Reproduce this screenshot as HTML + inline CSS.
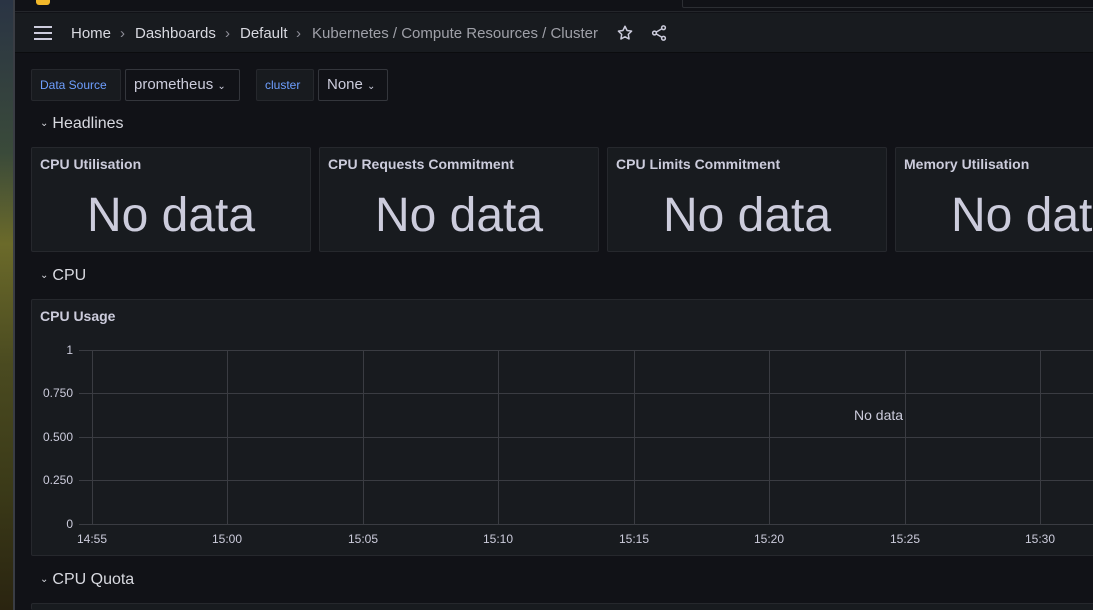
<!DOCTYPE html>
<html style="overflow:hidden;height:610px"><head><style>
*{margin:0;padding:0;box-sizing:border-box}
body{width:1093px;height:610px;overflow:hidden;background:#111217;font-family:"Liberation Sans",sans-serif;color:#ccccdc;position:relative}
.strip{position:absolute;left:0;top:0;width:13px;height:610px;background:linear-gradient(180deg,#2a3444 0%,#3a4a3a 25%,#6b6a2a 40%,#4a4a20 60%,#3b3a18 80%,#2a2410 100%)}
.edge{position:absolute;left:13px;top:0;width:2px;height:610px;background:#3a3d44}
.top{position:absolute;left:15px;top:0;right:0;height:12px;background:#111217;border-bottom:1px solid #24262b}
.search{position:absolute;left:667px;top:-2px;right:-2px;height:10px;border:1px solid #2c2e33;border-radius:2px;background:#111217}
.logo{position:absolute;left:21px;top:0;width:14px;height:5px;background:#f2b82a;border-radius:0 0 3px 3px}
.nav{position:absolute;left:15px;top:13px;right:0;height:40px;background:#181b1f;border-bottom:1px solid #0b0c0e;font-size:15px}
.nav span{position:absolute;top:12px}
.pnl{position:absolute;background:#181b1f;border:1px solid #26282d;border-radius:2px}
.pt{position:absolute;left:8px;top:8px;font-size:14px;font-weight:bold;color:#ccccdc}
.nd{position:absolute;left:0;right:0;top:40px;text-align:center;font-size:48px;color:#ccccdc;white-space:nowrap}
.row{position:absolute;left:40px;font-size:16px;color:#d8d9e0}
.row i{font-style:normal;font-size:10px;margin-right:4px;position:relative;top:-2px}
.lbl{position:absolute;height:32px;top:69px;background:#181b1f;border:1px solid #26282d;border-radius:2px;font-size:12px;color:#6e9fff;line-height:30px;padding-left:8px}
.sel{position:absolute;height:32px;top:69px;background:#111217;border:1px solid #34363c;border-radius:2px;font-size:15px;color:#ccccdc;line-height:30px;padding-left:8px}
.ax{position:absolute;font-size:12px;color:#ccccdc}
</style></head><body>
<div class="strip"></div><div class="edge"></div>
<div class="top"><div class="logo"></div><div class="search"></div></div>
<div class="nav">
<svg style="position:absolute;left:18px;top:12px" width="20" height="16"><path d="M1 2h18M1 8h18M1 14h18" stroke="#ccccdc" stroke-width="2"/></svg>
<span style="left:56px;color:#d8d9e0">Home</span>
<span style="left:105px;color:#8e8e98">›</span>
<span style="left:120px;color:#d8d9e0">Dashboards</span>
<span style="left:210px;color:#8e8e98">›</span>
<span style="left:225px;color:#d8d9e0">Default</span>
<span style="left:281px;color:#8e8e98">›</span>
<span style="left:297px;color:#9fa0a8">Kubernetes / Compute Resources / Cluster</span>
<svg style="position:absolute;left:601px;top:11px" width="18" height="18" viewBox="0 0 24 24"><path d="M12 3l2.7 5.6 6.1.9-4.4 4.3 1 6.1L12 17l-5.4 2.9 1-6.1L3.2 9.5l6.1-.9z" fill="none" stroke="#ccccdc" stroke-width="2" stroke-linejoin="round"/></svg>
<svg style="position:absolute;left:635px;top:11px" width="18" height="18" viewBox="0 0 24 24" fill="none" stroke="#ccccdc" stroke-width="2"><circle cx="18" cy="5" r="2.5"/><circle cx="6" cy="12" r="2.5"/><circle cx="18" cy="19" r="2.5"/><path d="M8.2 10.8l7.6-4.5M8.2 13.2l7.6 4.5"/></svg>
</div>
<div class="lbl" style="left:31px;width:90px">Data Source</div>
<div class="sel" style="left:125px;width:115px">prometheus <span style="font-size:10px">⌄</span></div>
<div class="lbl" style="left:256px;width:58px">cluster</div>
<div class="sel" style="left:318px;width:70px">None <span style="font-size:10px">⌄</span></div>
<div class="row" style="top:115px"><i>⌄</i>Headlines</div>
<div class="pnl" style="left:31px;top:147px;width:280px;height:105px"><div class="pt">CPU Utilisation</div><div class="nd">No data</div></div>
<div class="pnl" style="left:319px;top:147px;width:280px;height:105px"><div class="pt">CPU Requests Commitment</div><div class="nd">No data</div></div>
<div class="pnl" style="left:607px;top:147px;width:280px;height:105px"><div class="pt">CPU Limits Commitment</div><div class="nd">No data</div></div>
<div class="pnl" style="left:895px;top:147px;width:280px;height:105px"><div class="pt">Memory Utilisation</div><div class="nd">No data</div></div>
<div class="row" style="top:267px"><i>⌄</i>CPU</div>
<div class="pnl" style="left:31px;top:299px;width:1080px;height:257px"><div class="pt">CPU Usage</div></div>
<svg style="position:absolute;left:0;top:0" width="1093" height="610">
<g stroke="#3a3c42" stroke-width="1">
<path d="M79 350.5H1093M79 393.5H1093M79 437.5H1093M79 480.5H1093M79 524.5H1093"/>
<path d="M92.5 350V524M227.5 350V524M363.5 350V524M498.5 350V524M634.5 350V524M769.5 350V524M905.5 350V524M1040.5 350V524"/>
</g></svg>
<div class="ax" style="right:1020px;top:343px">1</div>
<div class="ax" style="right:1020px;top:386px">0.750</div>
<div class="ax" style="right:1020px;top:430px">0.500</div>
<div class="ax" style="right:1020px;top:473px">0.250</div>
<div class="ax" style="right:1020px;top:517px">0</div>
<div class="ax" style="left:77px;top:532px">14:55</div>
<div class="ax" style="left:212px;top:532px">15:00</div>
<div class="ax" style="left:348px;top:532px">15:05</div>
<div class="ax" style="left:483px;top:532px">15:10</div>
<div class="ax" style="left:619px;top:532px">15:15</div>
<div class="ax" style="left:754px;top:532px">15:20</div>
<div class="ax" style="left:890px;top:532px">15:25</div>
<div class="ax" style="left:1025px;top:532px">15:30</div>
<div class="ax" style="left:854px;top:407px;font-size:14px">No data</div>
<div class="row" style="top:571px"><i>⌄</i>CPU Quota</div>
<div class="pnl" style="left:31px;top:603px;width:1080px;height:7px;border-bottom:none"></div>
</body></html>
